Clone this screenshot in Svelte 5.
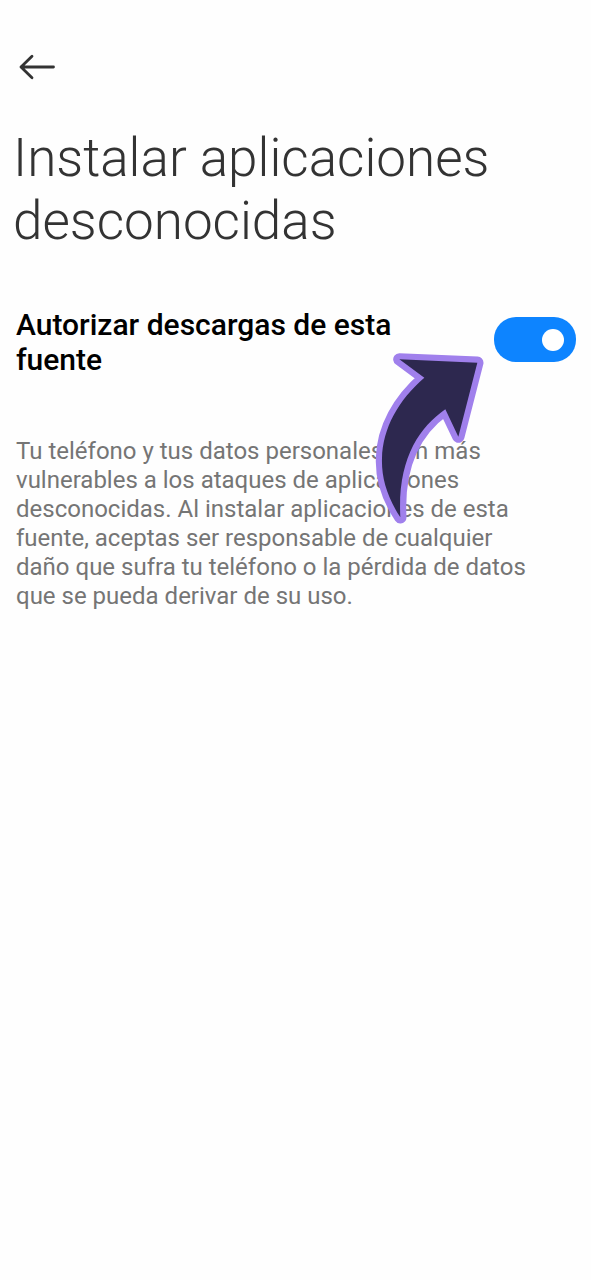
<script>
	let allowed = $state(true);
</script>

<main>
	<header>
		<a class="back" href="#back" aria-label="Atrás">
			<svg viewBox="0 0 36 26" aria-hidden="true">
				<path d="M34.5 13H2M13 2.2 2 13l11 10.8" />
			</svg>
		</a>
		<h1>Instalar aplicaciones desconocidas</h1>
	</header>

	<section class="setting">
		<label for="allow">Autorizar descargas de esta fuente</label>
		<input id="allow" type="checkbox" role="switch" bind:checked={allowed} />
		<svg class="pointer" viewBox="42 153 336 525" aria-hidden="true">
			<path
				d="M118 178 352 188 295 410 256 328C175 385 112 480 121 652C80 590 64 530 66 475C68 385 115 300 193 233Z"
			/>
		</svg>
	</section>

	<p>
		Tu teléfono y tus datos personales son más vulnerables a los ataques de aplicaciones desconocidas. Al
		instalar aplicaciones de esta fuente, aceptas ser responsable de cualquier daño que sufra tu teléfono o la
		pérdida de datos que se pueda derivar de su uso.
	</p>
</main>

<style>
	:global(body) {
		margin: 0;
		background: #fefefe;
		font-family: Roboto, "Liberation Sans", sans-serif;
	}

	main {
		padding: 52px 15px 32px 16px;
	}

	.back {
		display: block;
		width: 36px;
		padding: 2px 3px;
	}

	.back svg {
		display: block;
		width: 36px;
		height: 26px;
		fill: none;
		stroke: #333;
		stroke-width: 2.8;
		stroke-linecap: round;
		stroke-linejoin: round;
	}

	h1 {
		margin: 45px -3px 0;
		font-size: 53px;
		font-weight: 300;
		line-height: 63px;
		color: #333;
	}

	.setting {
		position: relative;
		display: flex;
		align-items: flex-start;
		justify-content: space-between;
		gap: 64px;
		margin-top: 54px;
	}

	label {
		max-width: 415px;
		font-size: 30px;
		font-weight: 500;
		line-height: 35px;
		color: #000;
	}

	input {
		flex: none;
		display: flex;
		align-items: center;
		appearance: none;
		width: 82px;
		height: 45px;
		margin: 10px 0 0;
		padding: 0 12px;
		border-radius: 22px;
		background: #ccc;
		cursor: pointer;
	}

	input::before {
		content: "";
		width: 22px;
		height: 22px;
		border-radius: 50%;
		background: #fff;
	}

	input:checked {
		justify-content: flex-end;
		background: #0d84ff;
	}

	.pointer {
		position: absolute;
		top: 44px;
		right: 90px;
		width: 112px;
		height: 175px;
		pointer-events: none;
		fill: #2d284f;
		stroke: #a080ec;
		stroke-width: 37;
		stroke-linejoin: round;
		paint-order: stroke;
	}

	p {
		margin: 60px 0 0;
		max-width: 530px;
		font-size: 24px;
		line-height: 29px;
		color: #757575;
	}
</style>
